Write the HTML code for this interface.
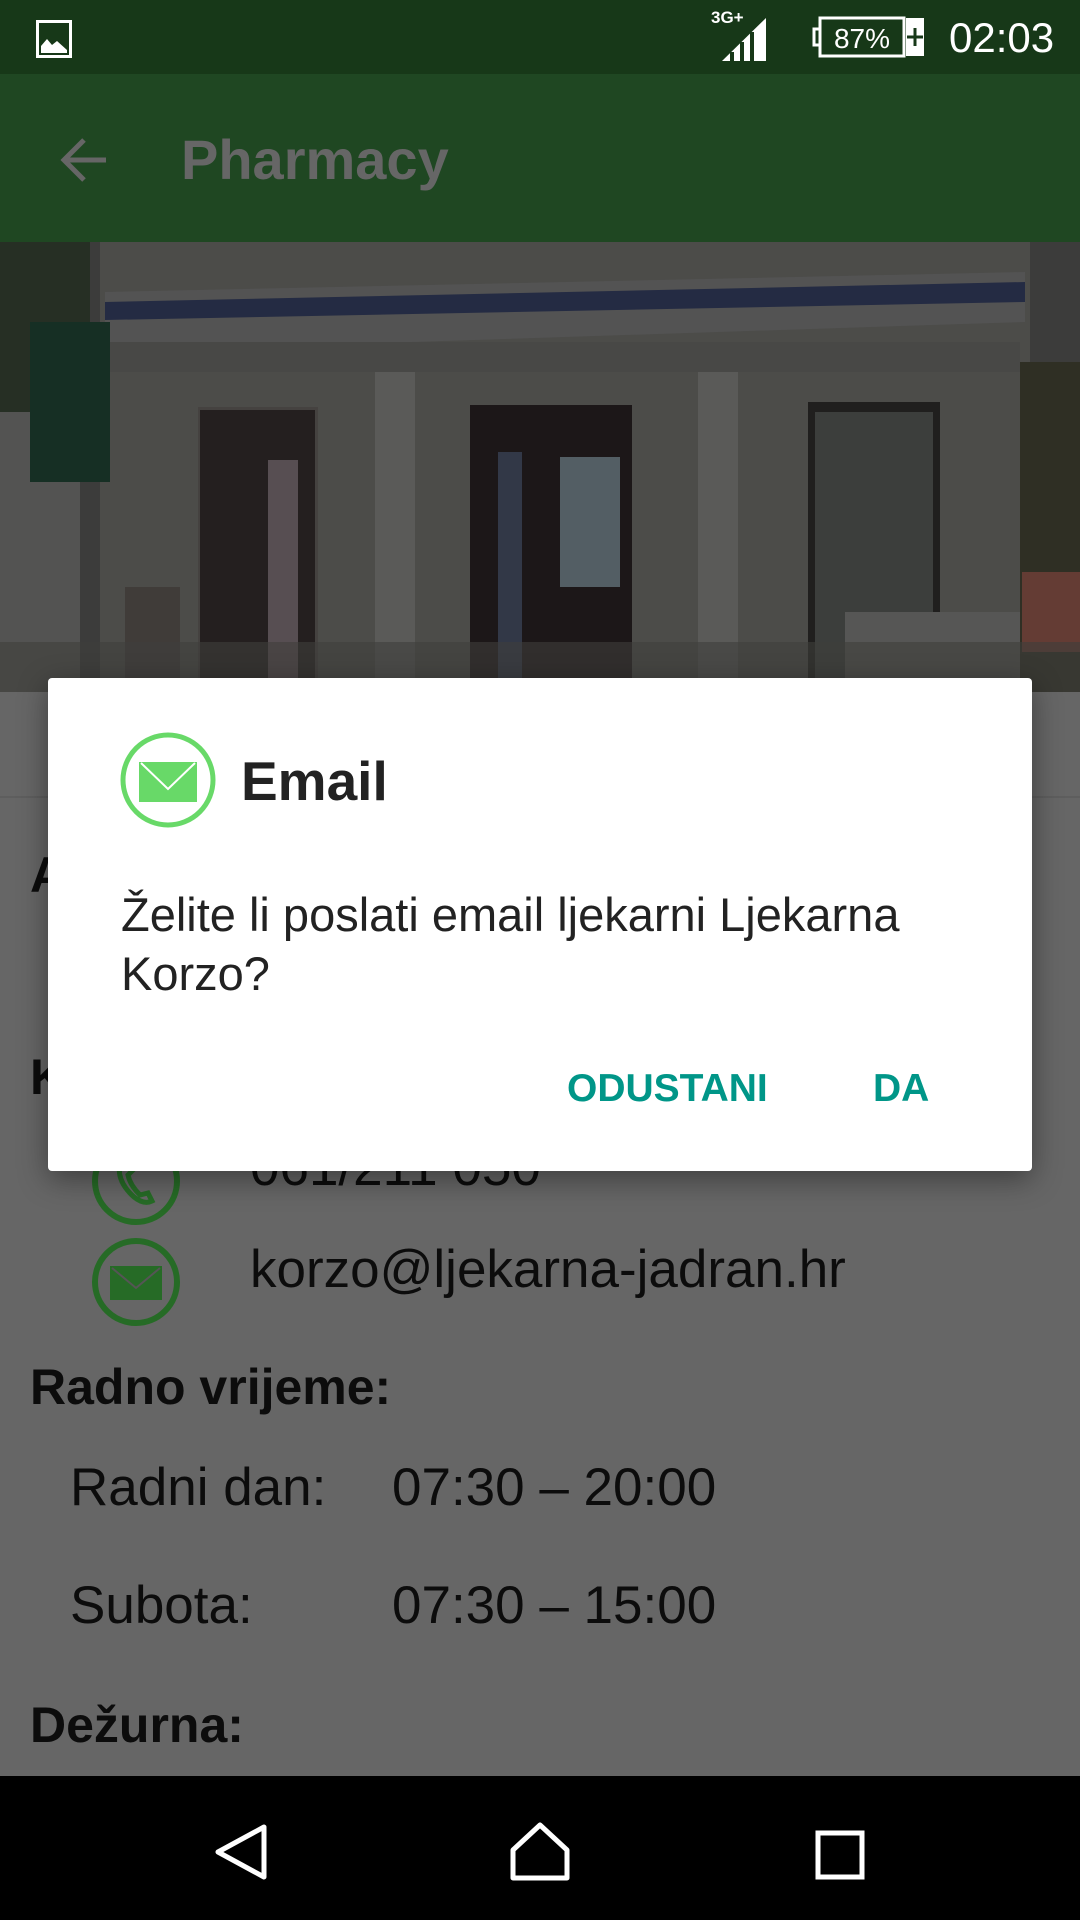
<!DOCTYPE html>
<html><head><meta charset="utf-8"><style>
*{margin:0;padding:0;box-sizing:border-box}
body{width:1080px;height:1920px;position:relative;overflow:hidden;background:#666;font-family:"Liberation Sans",sans-serif}
.abs{position:absolute}
.t{position:absolute;white-space:nowrap;color:#0c0c0c}
</style></head><body>
<!-- status bar -->
<div class="abs" style="left:0;top:0;width:1080px;height:74px;background:#173818"></div>
<svg class="abs" style="left:36px;top:20px" width="36" height="38" viewBox="0 0 36 38"><rect x="1.5" y="1.5" width="33" height="35" fill="none" stroke="#fff" stroke-width="3"/><path d="M5 33 L5 26 L11 19 L16 25 L21 21 L31 30 L31 33Z" fill="#fff"/></svg>
<div class="abs" style="left:711px;top:8px;color:#fff;font-size:17px;font-weight:bold">3G+</div>
<svg class="abs" style="left:720px;top:16px" width="48" height="46"><path d="M2 45 L46 2 L46 45Z" fill="#fff"/><path d="M12 45 L12 36 M22 45 L22 26 M32 45 L32 16" stroke="#173818" stroke-width="4"/></svg>
<svg class="abs" style="left:812px;top:16px" width="114" height="42"><rect x="8" y="2" width="84" height="38" fill="none" stroke="#fff" stroke-width="3"/><rect x="2" y="13" width="6" height="16" fill="none" stroke="#fff" stroke-width="3"/><rect x="94" y="2" width="18" height="38" fill="#fff"/><path d="M103 12 V30 M95 21 H111" stroke="#173818" stroke-width="3"/><text x="50" y="32" fill="#fff" font-size="28" text-anchor="middle" font-family="Liberation Sans">87%</text></svg>
<div class="abs" style="left:949px;top:14px;color:#fff;font-size:42px">02:03</div>
<!-- app bar -->
<div class="abs" style="left:0;top:74px;width:1080px;height:168px;background:#1f4722"></div>
<svg class="abs" style="left:58px;top:136px" width="52" height="48"><path d="M48 24 H6 M26 4 L6 24 L26 44" fill="none" stroke="#666" stroke-width="5"/></svg>
<div class="abs" style="left:181px;top:127px;color:#666;font-size:56px;font-weight:bold">Pharmacy</div>
<!-- photo -->
<svg class="abs" style="left:0;top:242px" width="1080" height="450">
<rect width="1080" height="450" fill="#4a4a48"/>
<rect x="100" y="0" width="930" height="450" fill="#5d5d5a"/>
<rect x="0" y="0" width="90" height="180" fill="#2f3a2c"/>
<rect x="0" y="170" width="80" height="280" fill="#666664"/>
<path d="M105 50 L1025 30 L1025 80 L105 110Z" fill="#666"/>
<path d="M105 60 L1025 40 L1025 60 L105 78Z" fill="#2d3552"/>
<rect x="110" y="100" width="910" height="30" fill="#585856"/>
<rect x="30" y="80" width="80" height="160" fill="#1c3a2c"/>
<rect x="198" y="165" width="120" height="330" fill="#55514f"/>
<rect x="200" y="168" width="115" height="325" fill="#2d2627"/>
<rect x="268" y="218" width="30" height="230" fill="#6b6065"/>
<rect x="470" y="163" width="162" height="485" fill="#231d1e"/>
<rect x="498" y="210" width="24" height="230" fill="#3e4557"/>
<rect x="560" y="215" width="60" height="130" fill="#66737a"/>
<rect x="808" y="160" width="132" height="400" fill="#282725"/>
<rect x="815" y="170" width="118" height="390" fill="#4a4c4a"/>
<rect x="375" y="130" width="40" height="320" fill="#6e6e6c"/>
<rect x="698" y="130" width="40" height="330" fill="#6e6e6c"/>
<rect x="845" y="370" width="175" height="80" fill="#6a6a68"/>
<rect x="1020" y="120" width="60" height="330" fill="#3a3a2c"/>
<rect x="1022" y="330" width="58" height="80" fill="#7a4a40"/>
<rect x="125" y="345" width="55" height="105" fill="#4f4a46"/>
<rect x="0" y="400" width="1080" height="50" fill="#4c4c4a" opacity=".6"/>
<rect width="1080" height="450" fill="#000" opacity=".18"/>
</svg>
<!-- background content (dimmed) -->
<div class="abs" style="left:0;top:796px;width:1080px;height:2px;background:#5e5e5e"></div>
<div class="t" style="left:30px;top:846px;font-size:50px;font-weight:bold">A</div>
<div class="t" style="left:30px;top:1048px;font-size:50px;font-weight:bold">K</div>
<div class="t" style="left:250px;top:1137px;font-size:53px">061/211 050</div>
<svg class="abs" style="left:90px;top:1135px" width="92" height="92"><circle cx="46" cy="46" r="41" fill="none" stroke="#266b26" stroke-width="6"/><path d="M30 28 Q26 46 44 62 Q54 70 62 66 L58 58 L50 60 Q40 50 38 40 L44 34 Z" fill="none" stroke="#266b26" stroke-width="5"/></svg>
<svg class="abs" style="left:90px;top:1236px" width="92" height="92"><circle cx="46" cy="46" r="41" fill="none" stroke="#266b26" stroke-width="6"/><rect x="20" y="30" width="52" height="34" fill="#266b26"/><path d="M22 32 L46 52 L70 32" fill="none" stroke="#555" stroke-width="2"/></svg>
<div class="t" style="left:250px;top:1239px;font-size:53px">korzo@ljekarna-jadran.hr</div>
<div class="t" style="left:30px;top:1358px;font-size:50px;font-weight:bold">Radno vrijeme:</div>
<div class="t" style="left:70px;top:1457px;font-size:53px">Radni dan:</div>
<div class="t" style="left:392px;top:1457px;font-size:53px">07:30 – 20:00</div>
<div class="t" style="left:70px;top:1575px;font-size:53px">Subota:</div>
<div class="t" style="left:392px;top:1575px;font-size:53px">07:30 – 15:00</div>
<div class="t" style="left:30px;top:1696px;font-size:50px;font-weight:bold">Dežurna:</div>
<!-- dialog -->
<div class="abs" style="left:48px;top:678px;width:984px;height:493px;background:#fff;border-radius:4px;box-shadow:0 8px 30px rgba(0,0,0,.4)"></div>
<svg class="abs" style="left:119px;top:731px" width="98" height="98"><circle cx="49" cy="49" r="45" fill="none" stroke="#68d968" stroke-width="5"/><rect x="20" y="31" width="58" height="40" fill="#68d968"/><path d="M22 32 L49 58 L76 32" fill="none" stroke="#fff" stroke-width="2"/></svg>
<div class="t" style="left:241px;top:749px;font-size:55px;font-weight:bold;color:#222">Email</div>
<div class="t" style="left:121px;top:887px;font-size:47px;color:#222">Želite li poslati email ljekarni Ljekarna</div>
<div class="t" style="left:121px;top:946px;font-size:47px;color:#222">Korzo?</div>
<div class="t" style="left:567px;top:1067px;font-size:39px;font-weight:bold;color:#009688">ODUSTANI</div>
<div class="t" style="left:873px;top:1067px;font-size:39px;font-weight:bold;color:#009688">DA</div>
<!-- nav bar -->
<div class="abs" style="left:0;top:1776px;width:1080px;height:144px;background:#000"></div>
<svg class="abs" style="left:210px;top:1822px" width="60" height="60"><path d="M54 5 L54 55 L8 30Z" fill="none" stroke="#fff" stroke-width="5" stroke-linejoin="round"/></svg>
<svg class="abs" style="left:508px;top:1820px" width="64" height="62"><path d="M5 30 L32 5 L59 30 L59 58 L5 58Z" fill="none" stroke="#fff" stroke-width="5" stroke-linejoin="round"/></svg>
<svg class="abs" style="left:815px;top:1830px" width="50" height="50"><rect x="3" y="3" width="44" height="44" fill="none" stroke="#fff" stroke-width="5"/></svg>
</body></html>
